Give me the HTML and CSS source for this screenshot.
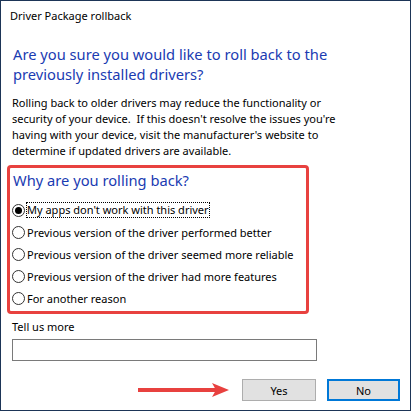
FILE: index.html
```html
<!DOCTYPE html>
<html>
<head>
<meta charset="utf-8">
<link rel="stylesheet" href="styles.css">
</head>
<body>
<div class="window">
  <div class="titlebar">Driver Package rollback</div>
  <div class="content">
    <h1 class="heading">Are you sure you would like to roll back to the previously installed drivers?</h1>
    <p class="desc">Rolling back to older drivers may reduce the functionality or security of your device.&nbsp; If this doesn't resolve the issues you're having with your device, visit the manufacturer's website to determine if updated drivers are available.</p>
    <div class="reasons">
      <h2 class="subheading">Why are you rolling back?</h2>
      <div class="options">
        <label class="option"><span class="radio checked"></span><span class="focus">My apps don't work with this driver</span></label>
        <label class="option"><span class="radio"></span><span>Previous version of the driver performed better</span></label>
        <label class="option"><span class="radio"></span><span>Previous version of the driver seemed more reliable</span></label>
        <label class="option"><span class="radio"></span><span>Previous version of the driver had more features</span></label>
        <label class="option"><span class="radio"></span><span>For another reason</span></label>
      </div>
    </div>
    <div class="more">
      <div class="more-label">Tell us more</div>
      <div class="textbox"></div>
    </div>
    <div class="buttons">
      <svg class="arrow" width="92" height="14" viewBox="0 0 92 14">
        <rect x="0" y="5" width="80" height="4" fill="#e8413f"/>
        <path d="M74 0 L91 7 L74 14 L78 7 Z" fill="#e8413f"/>
      </svg>
      <button class="btn">Yes</button>
      <button class="btn default">No</button>
    </div>
  </div>
</div>
</body>
</html>
```
FILE: styles.css
```css
html, body {
  margin: 0;
  padding: 0;
  background: #ffffff;
}
body {
  font-family: "Noto Sans", "Open Sans", sans-serif;
  font-size: 11px;
  color: #000;
}
.window {
  width: 409px;
  height: 409px;
  border: 1px solid #1d3557;
  background: #fff;
  display: flex;
  flex-direction: column;
}
.titlebar {
  padding: 7px 0 0 9px;
  height: 16px;
  line-height: 16px;
}
.content {
  padding: 0 0 0 6px;
  display: flex;
  flex-direction: column;
}
.heading {
  margin: 20px 0 0 6px;
  font-size: 14.7px;
  font-weight: normal;
  color: #1a3bb2;
  line-height: 20px;
  width: 340px;
}
.desc {
  margin: 11px 0 0 5px;
  line-height: 16px;
  width: 330px;
}
.reasons {
  margin-top: 6px;
  width: 294px;
  height: 143px;
  border: 3px solid #e8413f;
  border-radius: 4px;
  padding: 0 0 0 2px;
}
.subheading {
  margin: 2px 0 0 1px;
  font-size: 14.7px;
  font-weight: normal;
  color: #1a3bb2;
  line-height: 20px;
}
.options {
  display: flex;
  flex-direction: column;
  gap: 4px;
  margin-top: 11px;
}
.option {
  display: flex;
  align-items: center;
  gap: 2px;
  height: 18px;
}
.radio {
  width: 13px;
  height: 13px;
  border: 1px solid #333;
  border-radius: 50%;
  box-sizing: border-box;
  display: flex;
  align-items: center;
  justify-content: center;
  flex: none;
}
.radio.checked::after {
  content: "";
  width: 7px;
  height: 7px;
  border-radius: 50%;
  background: #000;
}
.focus {
  outline: 1px dotted #000;
  line-height: 14px;
}
.more {
  margin: 5px 0 0 5px;
}
.more-label {
  line-height: 16px;
}
.textbox {
  margin-top: 4px;
  width: 303px;
  height: 20px;
  border: 1px solid #7a7a7a;
}
.buttons {
  display: flex;
  align-items: center;
  justify-content: flex-end;
  margin: 18px 10px 0 0;
}
.arrow {
  margin-right: 12px;
}
.btn {
  width: 74px;
  height: 22px;
  font-family: "Noto Sans", "Open Sans", sans-serif;
  font-size: 11px;
  color: #000;
  background: #e1e1e1;
  border: 1px solid #adadad;
  padding: 0;
}
.btn.default {
  width: 73px;
  margin-left: 11px;
  border: 2px solid #0078d7;
}
```
